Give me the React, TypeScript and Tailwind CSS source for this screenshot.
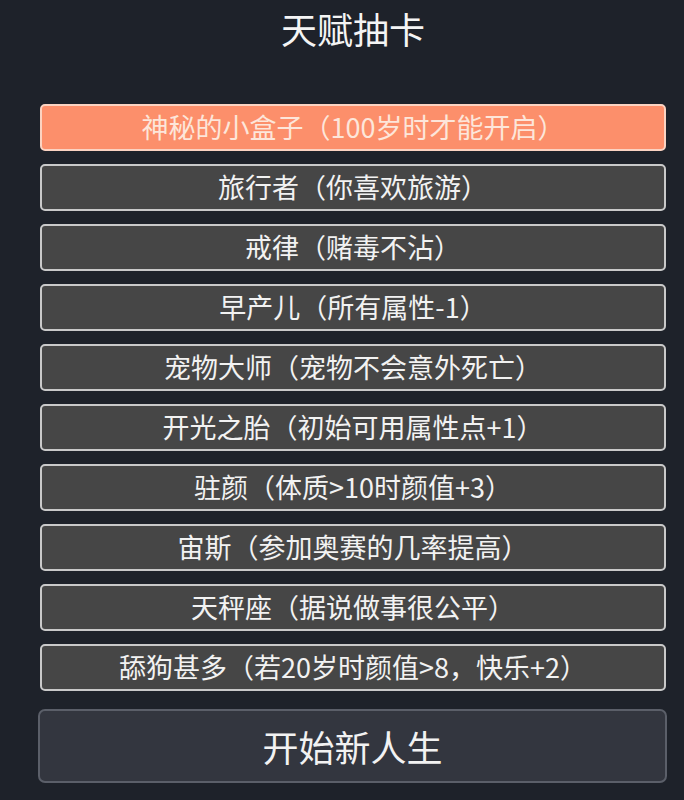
const talents = [
  "神秘的小盒子（100岁时才能开启）",
  "旅行者（你喜欢旅游）",
  "戒律（赌毒不沾）",
  "早产儿（所有属性-1）",
  "宠物大师（宠物不会意外死亡）",
  "开光之胎（初始可用属性点+1）",
  "驻颜（体质>10时颜值+3）",
  "宙斯（参加奥赛的几率提高）",
  "天秤座（据说做事很公平）",
  "舔狗甚多（若20岁时颜值>8，快乐+2）",
];

function TalentCard({ label, selected }: { label: string; selected: boolean }) {
  return (
    <div
      className={
        selected
          ? "flex h-[47px] items-center justify-center rounded-[5px] border-2 border-[#fbd3c2] bg-[#fc8f6b] text-[27px] text-[#fde6da]"
          : "flex h-[47px] items-center justify-center rounded-[5px] border-2 border-[#c9c9c9] bg-[#464646] text-[27px] text-[#f2f2f2]"
      }
    >
      {label}
    </div>
  );
}

export default function App() {
  return (
    <div
      className="flex h-[800px] w-[684px] flex-col bg-[#1e222a] pl-[40px] pr-[18px]"
      style={{ fontFamily: '"Noto Sans CJK SC", "Noto Sans", sans-serif' }}
    >
      <div className="flex h-[56px] items-center justify-center text-[36px] text-[#f4f4f4]">
        天赋抽卡
      </div>
      <div className="mt-[48px] flex flex-col gap-[13px]">
        {talents.map((t, i) => (
          <TalentCard key={t} label={t} selected={i === 0} />
        ))}
      </div>
      <div className="-ml-[2px] -mr-[1px] mt-[18px] flex h-[74px] items-center justify-center rounded-[7px] border-2 border-[#5b5f69] bg-[#33363f] text-[36px] text-[#f2f2f2]">
        开始新人生
      </div>
    </div>
  );
}
